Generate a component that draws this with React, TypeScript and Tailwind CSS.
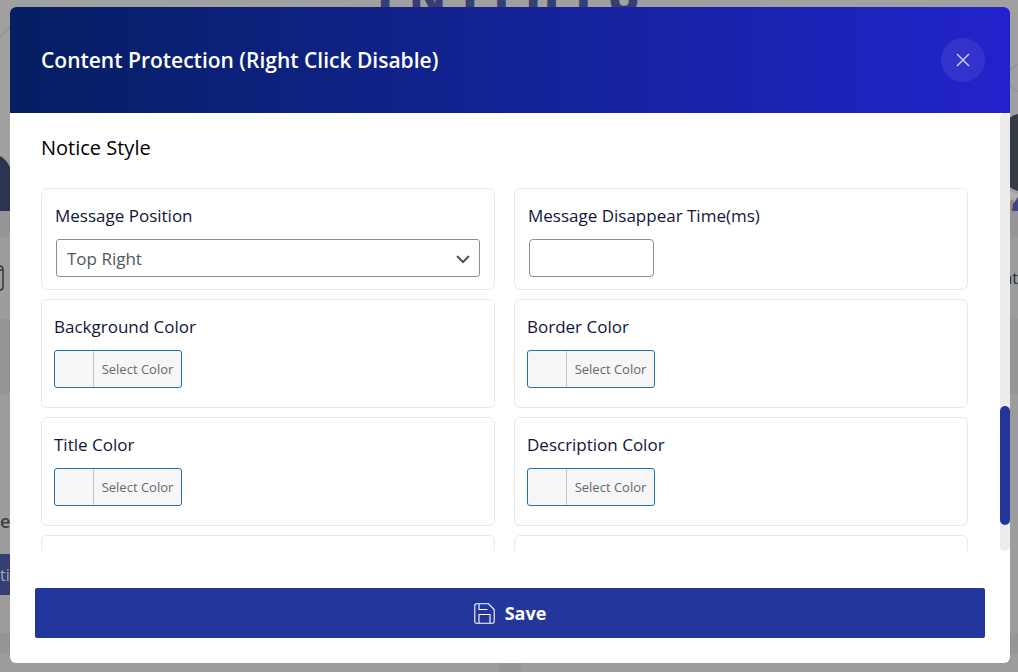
import React from 'react';

const colorFields = [
  { id: 'background-color', label: 'Background Color' },
  { id: 'border-color', label: 'Border Color' },
  { id: 'title-color', label: 'Title Color' },
  { id: 'description-color', label: 'Description Color' },
];

const heroLetters = ['I', 'N', 'I', 'I', 'H', 'J', 'U'];

const cardClass = 'rounded-md border border-[#e9e9ea] px-[13px] pt-[15px]';
const labelClass = 'block text-[17px] leading-6 font-medium text-[#10163a]';

const ColorField: React.FC<{ id: string; label: string }> = ({ id, label }) => (
  <div className="h-[109px] rounded-md border border-[#e9e9ea] px-3 pt-[15px]">
    <label htmlFor={id} className={labelClass}>{label}</label>
    <button
      id={id}
      className="mt-[11px] flex h-[38px] w-32 items-stretch rounded-[3px] border border-[#2271b1] bg-[#f6f6f7] text-[13px] text-[#646970]"
    >
      <span className="w-[39px] border-r border-[#c3c4c7]" />
      <span className="flex flex-1 items-center justify-center pt-0.5">Select Color</span>
    </button>
  </div>
);

const SaveIcon: React.FC = () => (
  <svg width="21" height="21" viewBox="0 0 21 21" fill="none" stroke="currentColor" strokeWidth="1.1" aria-hidden="true">
    <path d="M2 .8H14.5L20.2 6.5V18.7A1.5 1.5 0 0 1 18.7 20.2H2.3A1.5 1.5 0 0 1 .8 18.7V2Z" />
    <path d="M5 1V6.5H13.5M5 20V11.5H16V20" />
  </svg>
);

// Page behind the dialog, already dimmed
const Backdrop: React.FC = () => (
  <div className="flex min-h-screen flex-col bg-[#959595]" aria-hidden="true">
    <div className="flex h-[211px] justify-between overflow-hidden bg-[#a0a0a0]">
      <svg className="mt-[20px] shrink-0" width="20" height="191" viewBox="0 0 20 191">
        <path d="M0 17L14 3" stroke="#959595" strokeWidth="2" />
        <path d="M0 136Q6 139 10 147L20 160V191H0Z" fill="#2b3450" />
      </svg>
      <div className="-mt-[26px] flex w-[263px] justify-between text-[44px] leading-[44px] font-extrabold text-[#373f72]">
        {heroLetters.map((letter, i) => (
          <span key={i}>{letter}</span>
        ))}
      </div>
      <svg className="shrink-0" width="20" height="211" viewBox="0 0 20 211">
        <circle cx="24" cy="78" r="14" fill="none" stroke="#8d8d8d" />
        <path d="M20 114Q10 116 6 126V178Q10 189 20 191Z" fill="#343b42" />
        <path d="M8 188Q13 192 20 194V211H8Z" fill="#b0b0b0" />
        <path d="M10 202L16 199V211H10Z" fill="#a58472" />
        <path d="M15 204L20 197V211H14Z" fill="#3d4684" />
      </svg>
    </div>
    <div className="mt-[26px] flex h-[82px] items-center justify-between bg-[#9c9c9c]">
      <svg width="5" height="28" viewBox="0 0 5 28" fill="none" stroke="#2b2f38" strokeWidth="1.4">
        <path d="M0 2Q3 2 3 6V23Q3 26 0 26M0 6H3" />
      </svg>
      <span className="text-base text-[#262a3a]">nt</span>
    </div>
    <div className="mt-[75px] flex h-[239px] flex-col items-start bg-[#9c9c9c] pt-[115px]">
      <span className="text-[18px] leading-6 font-semibold text-[#3b3e45]">e</span>
      <span className="mt-[21px] flex h-[41px] items-center bg-[#363f73] text-base text-[#a5a5ad]">tin</span>
    </div>
    <div className="mt-[21px] flex flex-1 gap-[22px]">
      <div className="w-[499px] bg-[#9c9c9c]" />
      <div className="flex-1 bg-[#9c9c9c]" />
    </div>
  </div>
);

const App: React.FC = () => {
  return (
    <div className="relative h-screen overflow-hidden font-['Open_Sans','Noto_Sans',sans-serif]">
      <Backdrop />

      <div className="absolute inset-0 flex pt-[7px] pr-2 pb-[9px] pl-[10px]">
        <div role="dialog" aria-labelledby="dialog-title" className="flex min-w-0 flex-1 flex-col overflow-hidden rounded-md bg-white">
          {/* Header */}
          <div className="flex h-[106px] shrink-0 items-center justify-between bg-linear-to-r from-[#061e62] to-[#2222cc] pr-[25px] pl-[31px]">
            <h2 id="dialog-title" className="text-[21px] leading-8 font-semibold text-white">Content Protection (Right Click Disable)</h2>
            <button aria-label="Close" className="flex size-11 items-center justify-center rounded-full bg-white/8 text-white/80">
              <svg width="14" height="14" viewBox="0 0 14 14" fill="none" stroke="currentColor" strokeWidth="1.4">
                <path d="M1 1L13 13M13 1L1 13" />
              </svg>
            </button>
          </div>

          {/* Body */}
          <div className="flex min-h-0 flex-1">
            <div className="min-w-0 flex-1 overflow-hidden pt-5 pr-8 pl-[31px]">
              <h3 className="text-[20px] leading-[30px] font-medium text-black">Notice Style</h3>
              <div className="mt-[25px] grid grid-cols-2 gap-x-[19px] gap-y-[9px]">
                <div className={`h-[102px] ${cardClass}`}>
                  <label htmlFor="position" className={labelClass}>Message Position</label>
                  <div className="relative mx-px mt-[11px]">
                    <select id="position" className="h-[38px] w-full appearance-none rounded-[3px] border border-[#8c8f94] bg-white px-[10px] pt-0.5 text-[17px] text-[#50575e]">
                      <option>Top Right</option>
                    </select>
                    <svg className="pointer-events-none absolute top-3 right-2" width="16" height="16" viewBox="0 0 16 16" fill="none" stroke="#50555c" strokeWidth="2">
                      <path d="M1 5L7 11L13 5" />
                    </svg>
                  </div>
                </div>
                <div className={`h-[102px] ${cardClass}`}>
                  <label htmlFor="time" className={labelClass}>Message Disappear Time(ms)</label>
                  <input id="time" type="text" className="mx-px mt-[11px] block h-[38px] w-[125px] rounded-[4px] border border-[#8c8f94] px-2" />
                </div>
                {colorFields.map((field) => (
                  <ColorField key={field.id} id={field.id} label={field.label} />
                ))}
                <div className={`h-[109px] ${cardClass}`} />
                <div className={`h-[109px] ${cardClass}`} />
              </div>
            </div>
            <div className="flex w-[10px] flex-col rounded-full bg-[#ececec]">
              <div className="h-[67%]" />
              <div className="h-[27%] rounded-full bg-[#23369c]" />
            </div>
          </div>

          {/* Footer */}
          <div className="shrink-0 px-[25px] pt-[37px] pb-[25px]">
            <button className="flex h-[50px] w-full items-center justify-center gap-[10px] rounded-[2px] bg-[#23369c] text-[18px] font-bold text-white">
              <SaveIcon />
              Save
            </button>
          </div>
        </div>
      </div>
    </div>
  );
};

export default App;
